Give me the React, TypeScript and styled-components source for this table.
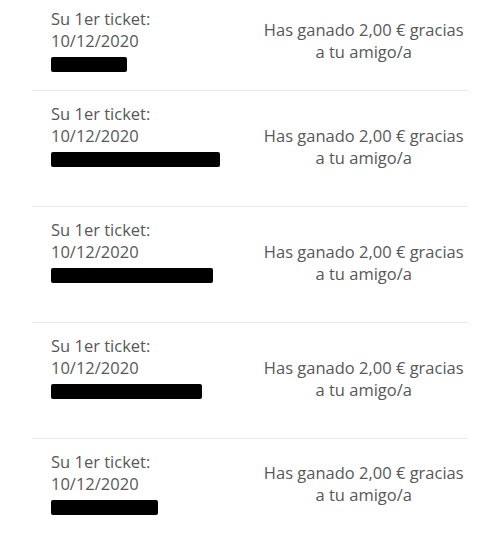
import React from "react";
import styled, { createGlobalStyle } from "styled-components";

const GlobalStyle = createGlobalStyle`
  html, body {
    margin: 0;
    padding: 0;
    background: #ffffff;
  }
  body {
    font-family: "Open Sans", "Liberation Sans", sans-serif;
    color: #585858;
  }
`;

const List = styled.ul`
  list-style: none;
  margin: -4px 32px 0;
  padding: 0;
`;

const Row = styled.li`
  display: grid;
  grid-template-columns: 1fr 1fr;
  align-items: center;
  padding: 12px 0 16px 19px;
  border-bottom: 1px solid #e9e9e9;
  font-size: 16.5px;
  line-height: 22px;
`;

const Info = styled.div`
  display: flex;
  flex-direction: column;
  align-self: start;
`;

const Line = styled.span`
  display: block;
  height: 22px;
`;

const Redacted = styled.span<{ $w: number; $extra: boolean }>`
  display: block;
  width: ${(p) => p.$w}px;
  height: 15px;
  margin-top: 5px;
  margin-bottom: ${(p) => (p.$extra ? 23 : 2)}px;
  background: #000000;
  border-radius: 2px;
`;

const Reward = styled.div`
  text-align: center;
`;

const rows = [
  { w: 76, extra: false },
  { w: 169, extra: true },
  { w: 162, extra: true },
  { w: 151, extra: true },
  { w: 107, extra: false },
];

export default function App() {
  return (
    <>
      <GlobalStyle />
      <List>
        {rows.map((r, i) => (
          <Row key={i}>
            <Info>
              <Line>Su 1er ticket:</Line>
              <Line>10/12/2020</Line>
              <Redacted $w={r.w} $extra={r.extra} aria-label="nombre oculto" />
            </Info>
            <Reward>
              Has ganado 2,00 € gracias
              <br />a tu amigo/a
            </Reward>
          </Row>
        ))}
      </List>
    </>
  );
}
